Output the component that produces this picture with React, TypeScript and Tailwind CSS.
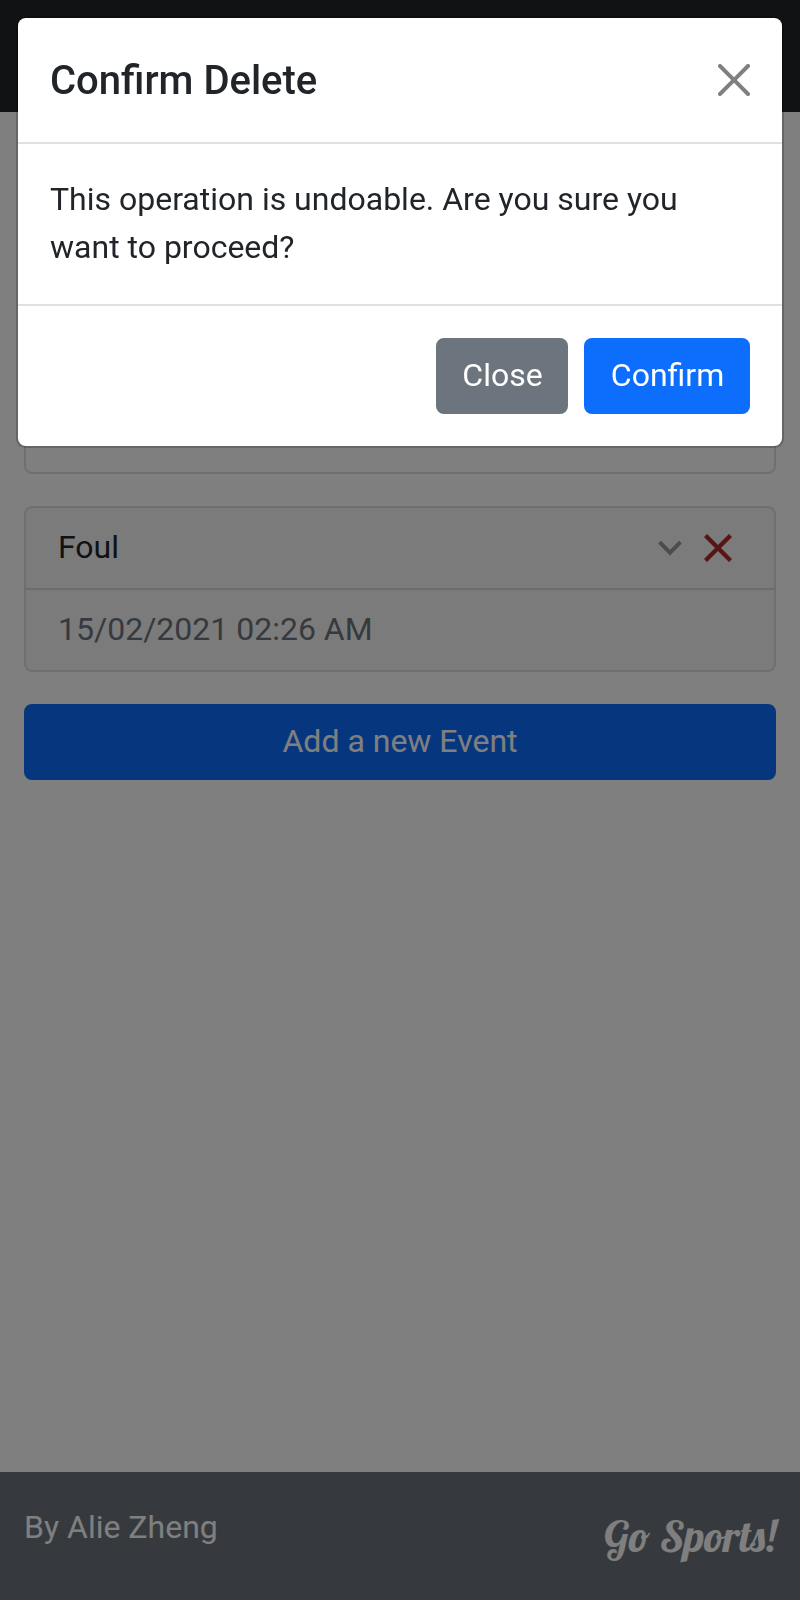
import React from "react";

function CloseIcon({ className }: { className: string }) {
  return (
    <svg viewBox="0 0 16 16" fill="currentColor" className={className}>
      <path d="M.293.293a1 1 0 011.414 0L8 6.586 14.293.293a1 1 0 111.414 1.414L9.414 8l6.293 6.293a1 1 0 01-1.414 1.414L8 9.414l-6.293 6.293a1 1 0 01-1.414-1.414L6.586 8 .293 1.707a1 1 0 010-1.414z" />
    </svg>
  );
}

function Page() {
  return (
    <div className="flex h-[1600px] flex-col bg-white text-[32px] leading-[48px] text-[#212529]">
      <header className="h-28 shrink-0 bg-[#212529]" />
      <main className="flex grow flex-col gap-8 px-6">
        <div className="h-[362px] rounded-lg border-2 border-black/[.125]" />
        <section className="overflow-hidden rounded-lg border-2 border-black/[.125]">
          <div className="flex items-center border-b-2 border-black/[.125] bg-black/[.03] px-8">
            <span className="grow pt-[15px] pb-[17px]">Foul</span>
            <svg viewBox="0 0 24 16" className="mr-[22px] h-4 w-6 text-[#999]" fill="none" stroke="currentColor" strokeWidth="4">
              <path d="M1.5 2.2 12 12.7 22.5 2.2" />
            </svg>
            <svg viewBox="0 0 28 28" className="mr-2.5 h-7 w-7 text-[#b02a2a]" fill="none" stroke="currentColor" strokeWidth="4.3">
              <path d="M1.5 1.5 26.5 26.5M26.5 1.5 1.5 26.5" />
            </svg>
          </div>
          <div className="bg-black/[.03] px-8 pt-[15px] pb-[17px] text-[#6c757d]">15/02/2021 02:26 AM</div>
        </section>
        <button className="rounded-lg border-2 border-[#0d6efd] bg-[#0d6efd] pt-[11px] pb-[13px] text-white">Add a new Event</button>
      </main>
      <footer className="flex h-32 shrink-0 justify-between bg-[#6c757d] px-6 text-white">
        <span className="pt-[31px]">By Alie Zheng</span>
        <span className="pt-[34px] font-[Lobster,cursive] text-[43.2px] leading-[60px] font-medium whitespace-nowrap">Go Sports!</span>
      </footer>
    </div>
  );
}

function ConfirmDialog() {
  return (
    <div className="fixed inset-0 p-4 text-[32px] leading-[48px] text-[#212529]">
      <div role="dialog" className="rounded-[9.6px] border-2 border-black/20 bg-white bg-clip-padding">
        <div className="flex items-center justify-between border-b-2 border-[#dee2e6] px-8">
          <h5 className="pt-[33px] pb-[31px] text-[40px] leading-[60px] font-medium">Confirm Delete</h5>
          <button aria-label="Close">
            <CloseIcon className="h-8 w-8 text-[#808080]" />
          </button>
        </div>
        <p className="px-8 pt-[31px] pb-[33px]">This operation is undoable. Are you sure you want to proceed?</p>
        <div className="flex justify-end gap-4 border-t-2 border-[#dee2e6] p-8">
          <button className="w-[132px] rounded-lg border-2 border-[#6c757d] bg-[#6c757d] pt-[11px] pb-[13px] pl-px text-white">Close</button>
          <button className="w-[166px] rounded-lg border-2 border-[#0d6efd] bg-[#0d6efd] pt-[11px] pb-[13px] pl-px text-white">Confirm</button>
        </div>
      </div>
    </div>
  );
}

export default function App() {
  return (
    <div className="font-[Roboto,sans-serif]">
      <Page />
      <div className="fixed inset-0 bg-black/50" />
      <ConfirmDialog />
    </div>
  );
}
